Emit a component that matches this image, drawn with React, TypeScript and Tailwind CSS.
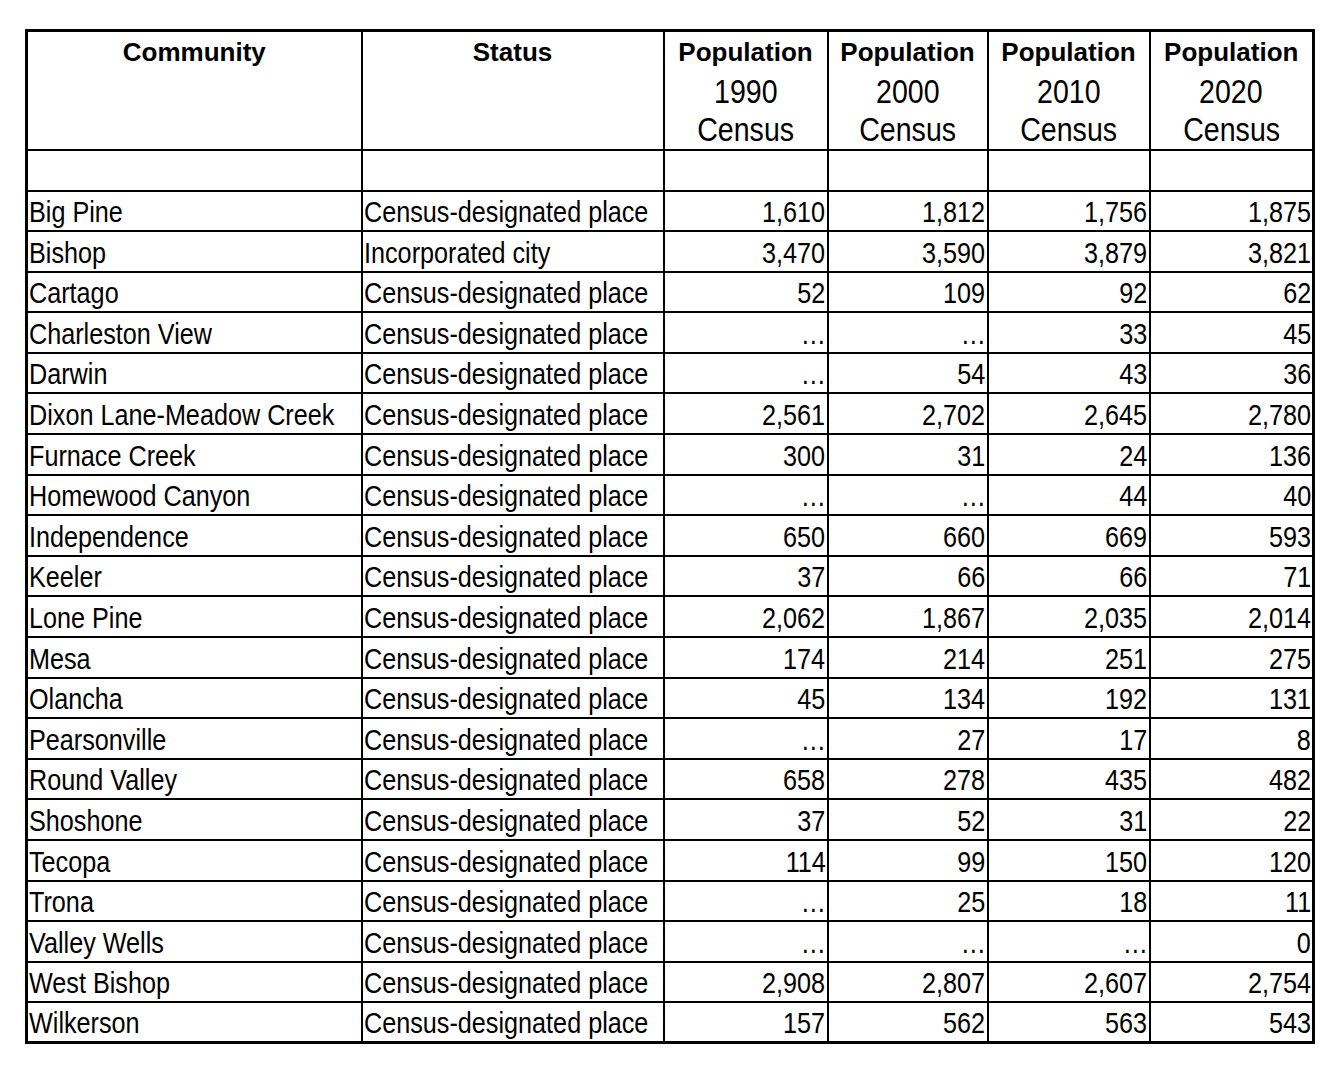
const rows: [string, string, string, string, string, string][] = [
  ["Big Pine", "Census-designated place", "1,610", "1,812", "1,756", "1,875"],
  ["Bishop", "Incorporated city", "3,470", "3,590", "3,879", "3,821"],
  ["Cartago", "Census-designated place", "52", "109", "92", "62"],
  ["Charleston View", "Census-designated place", "…", "…", "33", "45"],
  ["Darwin", "Census-designated place", "…", "54", "43", "36"],
  ["Dixon Lane-Meadow Creek", "Census-designated place", "2,561", "2,702", "2,645", "2,780"],
  ["Furnace Creek", "Census-designated place", "300", "31", "24", "136"],
  ["Homewood Canyon", "Census-designated place", "…", "…", "44", "40"],
  ["Independence", "Census-designated place", "650", "660", "669", "593"],
  ["Keeler", "Census-designated place", "37", "66", "66", "71"],
  ["Lone Pine", "Census-designated place", "2,062", "1,867", "2,035", "2,014"],
  ["Mesa", "Census-designated place", "174", "214", "251", "275"],
  ["Olancha", "Census-designated place", "45", "134", "192", "131"],
  ["Pearsonville", "Census-designated place", "…", "27", "17", "8"],
  ["Round Valley", "Census-designated place", "658", "278", "435", "482"],
  ["Shoshone", "Census-designated place", "37", "52", "31", "22"],
  ["Tecopa", "Census-designated place", "114", "99", "150", "120"],
  ["Trona", "Census-designated place", "…", "25", "18", "11"],
  ["Valley Wells", "Census-designated place", "…", "…", "…", "0"],
  ["West Bishop", "Census-designated place", "2,908", "2,807", "2,607", "2,754"],
  ["Wilkerson", "Census-designated place", "157", "562", "563", "543"],
];

const years = ["1990", "2000", "2010", "2020"];

// narrow text: Arial-width font squeezed to look like Arial Narrow
function Narrow({ text, align }: { text: string; align: "left" | "right" | "center" }) {
  const origin =
    align === "left" ? "origin-left" : align === "right" ? "origin-right" : "origin-center";
  return <span className={`inline-block whitespace-nowrap scale-x-[0.84] ${origin}`}>{text}</span>;
}

export default function App() {
  return (
    <div className="bg-white w-[1334px] h-[1083px] pt-[29px] pl-[25px] font-['Liberation_Sans',Arial,sans-serif] text-black">
      <table className="table-fixed border-collapse border-[3px] border-black w-[1287px]">
        <colgroup>
          <col className="w-[335px]" />
          <col className="w-[302px]" />
          <col className="w-[164px]" />
          <col className="w-[160px]" />
          <col className="w-[162px]" />
          <col className="w-[164px]" />
        </colgroup>
        <thead>
          <tr className="h-[119px]">
            <th className="border-2 border-black align-top text-center font-bold text-[26px] leading-[40px] pt-0">
              Community
            </th>
            <th className="border-2 border-black align-top text-center font-bold text-[26px] leading-[40px] pt-0">
              Status
            </th>
            {years.map((y) => (
              <th
                key={y}
                className="border-2 border-black align-top text-center font-normal pt-0 whitespace-nowrap"
              >
                <div className="font-bold text-[26px] leading-[40px]">Population</div>
                <div className="text-[34px] leading-[38px]">
                  <Narrow text={y} align="center" />
                </div>
                <div className="text-[34px] leading-[38px]">
                  <Narrow text="Census" align="center" />
                </div>
              </th>
            ))}
          </tr>
        </thead>
        <tbody>
          <tr className="h-[41px]">
            {[0, 1, 2, 3, 4, 5].map((i) => (
              <td key={i} className="border-2 border-black" />
            ))}
          </tr>
          {rows.map((r) => (
            <tr key={r[0]} className="h-[40.6px]">
              <td className="border-2 border-black text-[30px] leading-none align-bottom pl-[1px] pb-[3px] whitespace-nowrap">
                <Narrow text={r[0]} align="left" />
              </td>
              <td className="border-2 border-black text-[30px] leading-none align-bottom pl-[1px] pb-[3px] whitespace-nowrap">
                <Narrow text={r[1]} align="left" />
              </td>
              {r.slice(2).map((v, i) => (
                <td
                  key={i}
                  className="border-2 border-black text-[30px] leading-none align-bottom text-right pr-[1px] pb-[3px] whitespace-nowrap"
                >
                  <Narrow text={v} align="right" />
                </td>
              ))}
            </tr>
          ))}
        </tbody>
      </table>
    </div>
  );
}
